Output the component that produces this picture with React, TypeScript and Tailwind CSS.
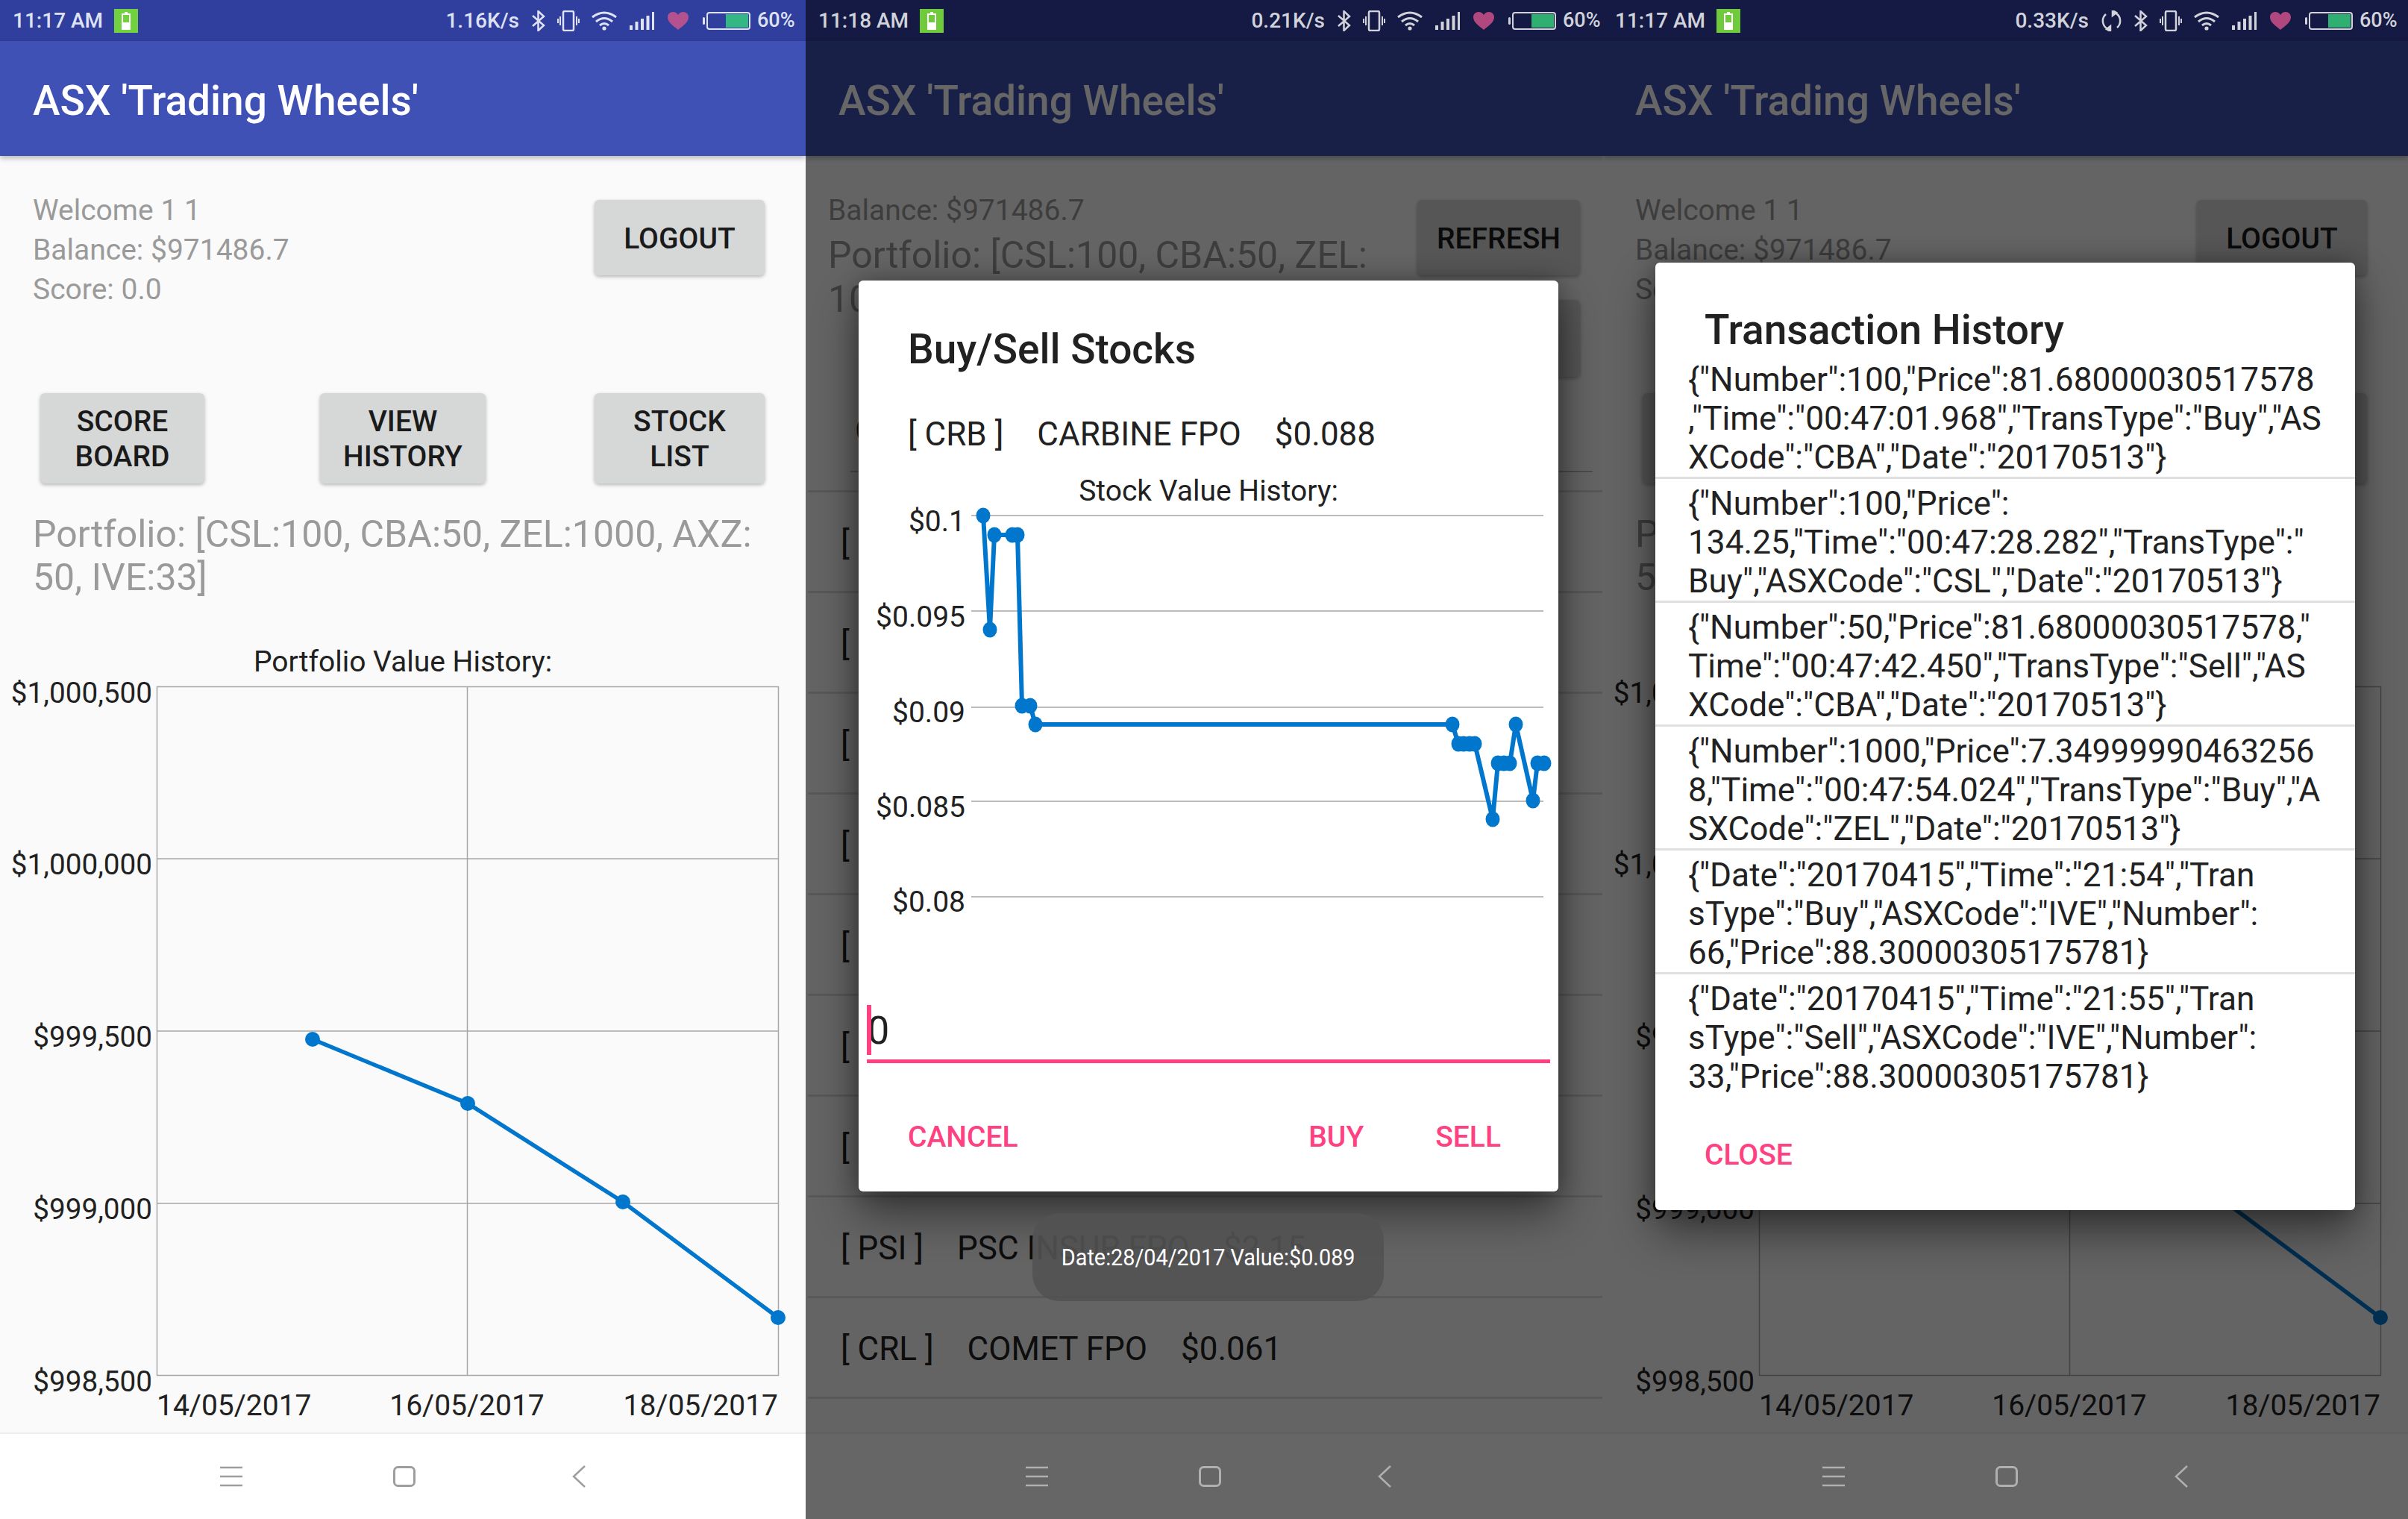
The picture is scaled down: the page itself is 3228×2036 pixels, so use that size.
import React from 'react';

const homeData = [
  [419, 1393],
  [627, 1479],
  [835, 1611],
  [1043, 1766],
];

const stockData = [
  [238, 691], [247, 844], [253, 717], [277, 717], [284, 717], [290, 946], [301, 946], [308, 971],
  [867, 971], [875, 997], [882, 997], [890, 997], [897, 997], [921, 1098], [928, 1023], [936, 1023],
  [944, 1023], [952, 971], [975, 1073], [981, 1023], [990, 1023],
];

const toPoints = (data: number[][]) => data.map((p) => p.join(',')).join(' ');

const history = [
  ['{"Number":100,"Price":81.68000030517578', ',"Time":"00:47:01.968","TransType":"Buy","AS', 'XCode":"CBA","Date":"20170513"}'],
  ['{"Number":100,"Price":', '134.25,"Time":"00:47:28.282","TransType":"', 'Buy","ASXCode":"CSL","Date":"20170513"}'],
  ['{"Number":50,"Price":81.68000030517578,"', 'Time":"00:47:42.450","TransType":"Sell","AS', 'XCode":"CBA","Date":"20170513"}'],
  ['{"Number":1000,"Price":7.34999990463256', '8,"Time":"00:47:54.024","TransType":"Buy","A', 'SXCode":"ZEL","Date":"20170513"}'],
  ['{"Date":"20170415","Time":"21:54","Tran', 'sType":"Buy","ASXCode":"IVE","Number":', '66,"Price":88.30000305175781}'],
  ['{"Date":"20170415","Time":"21:55","Tran', 'sType":"Sell","ASXCode":"IVE","Number":', '33,"Price":88.30000305175781}'],
];

function StatusBar({ time, speed, dim, sync }: { time: string; speed: string; dim?: boolean; sync?: boolean }) {
  const fg = dim ? '#d2d3da' : '#dfe2f2';
  return (
    <div className={`h-[55px] flex items-center pl-[17px] pr-[16px] text-[28px] font-medium shrink-0 ${dim ? 'bg-[#141a43] text-[#d2d3da]' : 'bg-[#303e9e] text-[#dfe2f2]'}`}>
      <span className="w-[121px] whitespace-nowrap">{time}</span>
      <svg className="ml-[15px]" width="32" height="32" viewBox="0 0 32 32">
        <rect width="32" height="32" fill={dim ? '#6fcb3c' : '#72d13f'} />
        <rect x="11" y="7" width="10" height="20" fill="none" stroke="#fff" strokeWidth="2" />
        <rect x="14" y="4" width="4" height="3" fill="#fff" />
        <rect x="11" y="18" width="10" height="9" fill="#fff" />
      </svg>
      <span className="ml-auto whitespace-nowrap">{speed}</span>
      {sync && (
        <svg className="ml-[17px]" width="27" height="28" viewBox="0 0 27 28" fill="none" stroke={fg} strokeWidth="2.5">
          <path d="M6 5 A12 12 0 0 0 9 25" />
          <path d="M21 23 A12 12 0 0 0 18 3" />
          <path d="M15 0 L20 3 L15 7 Z" fill={fg} />
          <path d="M12 28 L7 25 L12 21 Z" fill={fg} />
        </svg>
      )}
      <svg className="ml-[17px]" width="18" height="28" viewBox="0 0 18 28" fill="none" stroke={fg} strokeWidth="2.5">
        <path d="M1 7 L16 20 L8.5 27 V1 L16 8 L1 21" />
      </svg>
      <svg className="ml-[16px]" width="30" height="28" viewBox="0 0 30 28" fill="none" stroke={fg} strokeWidth="2">
        <rect x="8" y="1" width="14" height="26" rx="2" strokeWidth="2.5" />
        <path d="M4 8 V20 M1 11 V17 M26 8 V20 M29 11 V17" />
      </svg>
      <svg className="ml-[16px]" width="34" height="26" viewBox="0 0 34 26" fill="none" stroke={fg} strokeWidth="3">
        <path d="M1 8 Q17 -4 33 8" />
        <path d="M6 14 Q17 5 28 14" />
        <path d="M11 19 Q17 14 23 19" />
        <circle cx="17" cy="23" r="2.6" fill={fg} stroke="none" />
      </svg>
      <svg className="ml-[17px]" width="34" height="24" viewBox="0 0 34 24" fill={fg}>
        <rect x="0" y="18" width="4" height="6" />
        <rect x="7.5" y="13" width="4" height="11" />
        <rect x="15" y="9" width="4" height="15" />
        <rect x="22.5" y="5" width="4" height="19" />
        <rect x="30" y="0" width="3" height="24" />
      </svg>
      <svg className="ml-[17px]" width="28" height="24" viewBox="0 0 28 24" fill={dim ? '#b0487f' : '#b3528f'}>
        <path d="M14 24 C8 19 0 14 0 7 C0 3 3 0 7 0 C10 0 12.5 1.5 14 4 C15.5 1.5 18 0 21 0 C25 0 28 3 28 7 C28 14 20 19 14 24 Z" />
      </svg>
      <svg className="ml-[19px]" width="64" height="24" viewBox="0 0 64 24" fill="none">
        <rect x="0" y="7" width="3" height="10" rx="1.5" fill={fg} />
        <rect x="6" y="1" width="57" height="22" rx="3" stroke={fg} strokeWidth="2" />
        <rect x="31" y="3" width="30" height="18" fill={dim ? '#2fb071' : '#35b784'} />
      </svg>
      <span className="ml-[9px] w-[49px] text-[27px] whitespace-nowrap">60%</span>
    </div>
  );
}

function AppBar() {
  return (
    <div className="relative z-10 h-[154px] shrink-0 flex items-center pl-[44px] pt-[6px] bg-[#3f51b5] text-white text-[55px] font-medium shadow-[0_3px_7px_rgba(0,0,0,0.28)]">
      ASX 'Trading Wheels'
    </div>
  );
}

function NavBar({ dim }: { dim?: boolean }) {
  return (
    <div className={`h-[116px] shrink-0 flex items-center border-t-2 ${dim ? 'bg-[#666666] border-[#5e5e5e]' : 'bg-white border-[#eeeeee]'}`}>
      <svg className="ml-[295px]" width="30" height="28" viewBox="0 0 30 28" stroke={dim ? '#b0b0b0' : '#9e9e9e'} strokeWidth="2.5">
        <path d="M0 2 H30 M0 14 H30 M0 26 H30" />
      </svg>
      <svg className="ml-[202px]" width="30" height="28" viewBox="0 0 30 28" fill="none" stroke={dim ? '#b0b0b0' : '#9e9e9e'} strokeWidth="3">
        <rect x="1.5" y="1.5" width="27" height="25" rx="5" />
      </svg>
      <svg className="ml-[209px]" width="20" height="30" viewBox="0 0 20 30" fill="none" stroke={dim ? '#b0b0b0' : '#9e9e9e'} strokeWidth="2.5">
        <path d="M18 1 L3 15 L18 29" />
      </svg>
    </div>
  );
}

function GrayButton({ label, className }: { label?: React.ReactNode; className: string }) {
  return (
    <div className={`flex items-center justify-center text-center pt-[3px] rounded-[6px] bg-[#d6d7d7] text-[#1a1a1a] text-[39px] leading-[47px] font-medium shadow-[0_2px_5px_rgba(0,0,0,0.28)] ${className}`}>
      {label}
    </div>
  );
}

function PortfolioChart() {
  const yTicks = [
    ['$1,000,500', 942],
    ['$1,000,000', 1172],
    ['$999,500', 1403],
    ['$999,000', 1634],
    ['$998,500', 1865],
  ] as const;
  return (
    <svg className="block w-[1080px] h-[1009px]" viewBox="0 911 1080 1009" fill="#212121" fontSize="39">
      <g fill="none" stroke="#a6a6a6" strokeWidth="1.5">
        <rect x="210.5" y="920.5" width="833" height="923" />
        <path d="M210 1151 H1043 M210 1382 H1043 M210 1613 H1043 M626.5 920 V1843" />
      </g>
      <polyline points={toPoints(homeData)} fill="none" stroke="#0077cc" strokeWidth="5.5" />
      {homeData.map(([x, y]) => (
        <circle key={x} cx={x} cy={y} r="10" fill="#0077cc" />
      ))}
      {yTicks.map(([label, y]) => (
        <text key={label} x="204" y={y} textAnchor="end" fontSize="38.7">{label}</text>
      ))}
      <text x="210" y="1897">14/05/2017</text>
      <text x="626" y="1897" textAnchor="middle">16/05/2017</text>
      <text x="1043" y="1897" textAnchor="end">18/05/2017</text>
    </svg>
  );
}

function HomeScreen() {
  return (
    <div className="flex-1 flex flex-col bg-[#fafafa]">
      <div className="flex justify-between pl-[44px] pr-[55px]">
        <div className="pt-[47px] text-[39px] leading-[53px] text-[#9a9a9a]">
          <div>Welcome 1 1</div>
          <div>Balance: $971486.7</div>
          <div>Score: 0.0</div>
        </div>
        <GrayButton label="LOGOUT" className="mt-[59px] w-[228px] h-[101px]" />
      </div>
      <div className="flex mt-[112px] pl-[54px]">
        <GrayButton label={<>SCORE<br />BOARD</>} className="w-[220px] h-[121px]" />
        <GrayButton label={<>VIEW<br />HISTORY</>} className="w-[222px] h-[121px] ml-[155px]" />
        <GrayButton label={<>STOCK<br />LIST</>} className="w-[228px] h-[121px] ml-[146px]" />
      </div>
      <div className="mt-[39px] pl-[44px] text-[50px] leading-[58px] text-[#9a9a9a] whitespace-nowrap">
        Portfolio: [CSL:100, CBA:50, ZEL:1000, AXZ:<br />50, IVE:33]
      </div>
      <div className="mt-[59px] h-[49px] text-center text-[39px] leading-[50px] text-[#212121]">Portfolio Value History:</div>
      <PortfolioChart />
    </div>
  );
}

function StockRow({ cols, className }: { cols: string[]; className?: string }) {
  return (
    <div className={`flex gap-[45px] text-[44px] text-[#212121] whitespace-nowrap ${className ?? ''}`}>
      {cols.map((c) => (
        <span key={c}>{c}</span>
      ))}
    </div>
  );
}

function StockScreen() {
  const rows = [['['], ['['], ['['], ['['], ['['], ['['], ['['], ['[ PSI ]', 'PSC INSUR FPO', '$2.15'], ['[ CRL ]', 'COMET FPO', '$0.061']];
  return (
    <div className="flex-1 flex flex-col bg-[#fafafa] min-h-0">
      <div className="flex justify-between pl-[30px] pr-[42px]">
        <div className="whitespace-nowrap">
          <div className="pt-[51px] text-[39px] leading-[45px] text-[#9a9a9a]">Balance: $971486.7</div>
          <div className="mt-[8px] text-[50px] leading-[59px] text-[#9a9a9a]">
            Portfolio: [CSL:100, CBA:50, ZEL:<br />1000, AXZ:50, IVE:33]
          </div>
        </div>
        <div className="flex flex-col">
          <GrayButton label="REFRESH" className="mt-[59px] w-[218px] h-[101px]" />
          <GrayButton className="mt-[33px] w-[218px] h-[103px]" />
        </div>
      </div>
      <div className="ml-[60px] w-[995px] h-[128px] pt-[46px] pl-[6px] text-[44px] leading-[52px] text-[#212121] border-b-2 border-[#bdbdbd]">C</div>
      <div className="mt-[24px] ml-[3px] border-t-[3px] border-[#dcdcdc]">
        {rows.map((cols, i) => (
          <div key={i} className="h-[135px] flex items-center pl-[44px] pt-[3px] border-b-[3px] border-[#dcdcdc]">
            <StockRow cols={cols} />
          </div>
        ))}
      </div>
    </div>
  );
}

function BuySellDialog() {
  return (
    <div className="absolute left-[71px] top-[376px] w-[938px] h-[1221px] rounded-[6px] bg-white flex flex-col shadow-[0_30px_60px_rgba(0,0,0,0.45),0_0_30px_rgba(0,0,0,0.3)]">
      <div className="pt-[57px] pl-[66px] text-[55px] leading-[70px] font-medium text-[#212121]">Buy/Sell Stocks</div>
      <StockRow cols={['[ CRB ]', 'CARBINE FPO', '$0.088']} className="mt-[51px] pl-[66px] leading-[56px]" />
      <div className="mt-[23px] text-center text-[39px] leading-[50px] text-[#212121]">Stock Value History:</div>
      <svg className="block w-[938px] h-[657px] overflow-visible" viewBox="71 683 938 657" fill="#212121" fontSize="39">
        <path d="M222 691 H989 M222 819 H989 M222 948 H989 M222 1074 H989 M222 1202 H989" fill="none" stroke="#a6a6a6" strokeWidth="1.5" />
        <polyline points={toPoints(stockData)} fill="none" stroke="#0077cc" strokeWidth="6" />
        {stockData.map(([x, y]) => (
          <ellipse key={x} cx={x} cy={y} rx="9.5" ry="10.5" fill="#0077cc" />
        ))}
        <text x="214" y="712" textAnchor="end">$0.1</text>
        <text x="214" y="840" textAnchor="end">$0.095</text>
        <text x="214" y="968" textAnchor="end">$0.09</text>
        <text x="214" y="1095" textAnchor="end">$0.085</text>
        <text x="214" y="1222" textAnchor="end">$0.08</text>
      </svg>
      <div className="relative ml-[11px] w-[916px] h-[85px] border-b-[5px] border-[#ff4081] text-[52px] leading-[84px] text-[#212121] pl-[1px]">
        0
        <div className="absolute left-0 top-[7px] w-[6px] h-[67px] bg-[#ff4081]" />
      </div>
      <div className="mt-[74px] flex pl-[66px] pr-[77px] text-[39px] leading-[50px] font-medium text-[#ff4081]">
        <span>CANCEL</span>
        <span className="ml-auto">BUY</span>
        <span className="ml-[96px]">SELL</span>
      </div>
    </div>
  );
}

function HistoryDialog() {
  return (
    <div className="absolute left-[71px] top-[352px] w-[938px] h-[1270px] rounded-[6px] bg-white flex flex-col shadow-[0_30px_60px_rgba(0,0,0,0.45),0_0_30px_rgba(0,0,0,0.3)]">
      <div className="pt-[55px] pl-[66px] text-[55px] leading-[70px] font-medium text-[#212121]">Transaction History</div>
      <div className="mt-[6px] text-[44.2px] leading-[52px] text-[#212121] whitespace-nowrap">
        {history.map((lines, i) => (
          <div key={i} className={`pl-[44px] ${i > 0 ? 'pt-[7px]' : ''} ${i < history.length - 1 ? 'border-b-[3px] border-[#e0e0e0]' : ''}`}>
            {lines.map((line) => (
              <div key={line}>{line}</div>
            ))}
          </div>
        ))}
      </div>
      <div className="mt-[54px] pl-[66px] text-[39px] leading-[50px] font-medium text-[#ff4081]">CLOSE</div>
    </div>
  );
}

export default function App() {
  return (
    <div className="flex w-[3228px] h-[2036px] overflow-hidden font-['Roboto',sans-serif]">
      <div className="relative w-[1080px] shrink-0 flex flex-col overflow-hidden">
        <StatusBar time="11:17 AM" speed="1.16K/s" />
        <AppBar />
        <HomeScreen />
        <NavBar />
      </div>

      <div className="w-[1068px] shrink-0 overflow-hidden">
        <div className="relative w-[1080px] h-full flex flex-col">
          <StatusBar time="11:18 AM" speed="0.21K/s" dim />
          <AppBar />
          <StockScreen />
          <NavBar dim />
          <div className="absolute z-20 left-0 right-0 top-[55px] h-[1865px] bg-black/60" />
          <div className="absolute z-30 inset-0">
            <BuySellDialog />
            <div className="absolute left-[304px] top-[1626px] w-[471px] h-[118px] rounded-[36px] bg-[#525252]/90 flex items-center justify-center text-white text-[32px] whitespace-nowrap">
              <span className="inline-block scale-x-90">Date:28/04/2017 Value:$0.089</span>
            </div>
          </div>
        </div>
      </div>

      <div className="relative w-[1080px] shrink-0 flex flex-col overflow-hidden">
        <StatusBar time="11:17 AM" speed="0.33K/s" dim sync />
        <AppBar />
        <HomeScreen />
        <NavBar dim />
        <div className="absolute z-20 left-0 right-0 top-[55px] h-[1865px] bg-black/60" />
        <div className="absolute z-30 inset-0">
          <HistoryDialog />
        </div>
      </div>
    </div>
  );
}
